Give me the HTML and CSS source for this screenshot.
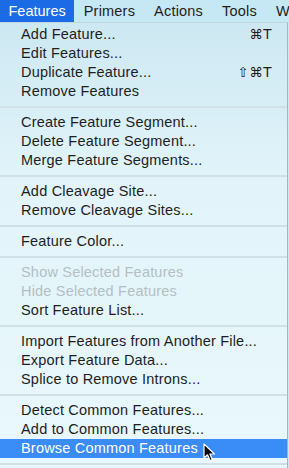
FILE: index.html
```html
<!DOCTYPE html>
<html lang="en">
<head>
  <meta charset="UTF-8" />
  <title>Features Menu</title>
  <link rel="stylesheet" href="styles.css">
</head>
<body>

<div class="menubar">
  <div class="title active">Features</div>
  <div class="title">Primers</div>
  <div class="title">Actions</div>
  <div class="title">Tools</div>
  <div class="title">Window</div>
</div>

<div class="menu">
  <div class="item"><span>Add Feature...</span><span class="key">⌘T</span></div>
  <div class="item"><span>Edit Features...</span></div>
  <div class="item"><span>Duplicate Feature...</span><span class="key">⇧⌘T</span></div>
  <div class="item"><span>Remove Features</span></div>
  <div class="sep"></div>
  <div class="item"><span>Create Feature Segment...</span></div>
  <div class="item"><span>Delete Feature Segment...</span></div>
  <div class="item"><span>Merge Feature Segments...</span></div>
  <div class="sep"></div>
  <div class="item"><span>Add Cleavage Site...</span></div>
  <div class="item"><span>Remove Cleavage Sites...</span></div>
  <div class="sep"></div>
  <div class="item"><span>Feature Color...</span></div>
  <div class="sep"></div>
  <div class="item disabled"><span>Show Selected Features</span></div>
  <div class="item disabled"><span>Hide Selected Features</span></div>
  <div class="item"><span>Sort Feature List...</span></div>
  <div class="sep"></div>
  <div class="item"><span>Import Features from Another File...</span></div>
  <div class="item"><span>Export Feature Data...</span></div>
  <div class="item"><span>Splice to Remove Introns...</span></div>
  <div class="sep"></div>
  <div class="item"><span>Detect Common Features...</span></div>
  <div class="item"><span>Add to Common Features...</span></div>
  <div class="item selected"><span>Browse Common Features</span></div>
  <div class="sep"></div>

  <!-- mouse pointer over the highlighted item -->
  <svg class="cursor" width="14" height="20" viewBox="0 0 14 20">
    <path d="M1 1 L1 15 L4.5 11.8 L7 17.5 L9.3 16.5 L6.9 11 L11.5 11 Z" fill="#000" stroke="#fff" stroke-width="1.2" stroke-linejoin="round"/>
  </svg>
</div>

</body>
</html>
```

FILE: styles.css
```css
html, body {
  margin: 0;
  padding: 0;
  overflow: hidden;
  background: #c8e9f5;
  font-family: "Liberation Sans", Arial, sans-serif;
  font-size: 14.5px;
  letter-spacing: 0.2px;
  color: #1e1e1e;
}

.menubar {
  display: flex;
  height: 22px;
  align-items: stretch;
  background: #c6e8f4;
  white-space: nowrap;
  overflow: hidden;
}

.title {
  padding: 0 9.5px;
  line-height: 22px;
}

.title.active {
  background: #1b6be6;
  color: white;
  padding: 0 8.5px;
  letter-spacing: 0;
}

.menu {
  position: relative;
  width: 287px;
  border-right: 1px solid #a7b6bb;
  border-top: 1px solid #bfd7df;
  padding-top: 2px;
  background: linear-gradient(#cde8f2, #e2f4fa 160px, #e9f8fc);
  height: 460px;
}

.item {
  display: flex;
  justify-content: space-between;
  height: 19px;
  line-height: 19px;
  padding: 0 15px 0 21px;
  white-space: nowrap;
}

.item.disabled {
  color: #b3bfc3;
}

.item.selected {
  background: #3a8cf6;
  color: white;
}

.key {
  font-family: "DejaVu Sans", sans-serif;
  font-size: 13.5px;
  letter-spacing: 0.5px;
}

.sep {
  height: 2px;
  margin: 5px 0;
  background: #d0e1e6;
}

.cursor {
  position: absolute;
  left: 203px;
  top: 420px;
}
```
